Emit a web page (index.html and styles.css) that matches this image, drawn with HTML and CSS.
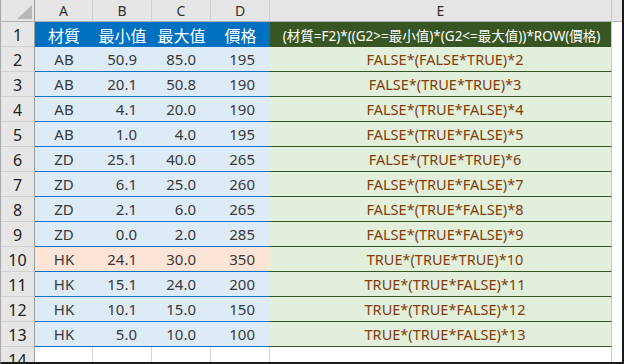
FILE: index.html
```html
<!DOCTYPE html>
<html lang="zh-Hant">
<head>
<meta charset="utf-8">
<link rel="stylesheet" href="styles.css">
</head>
<body>
<div class="sheet">
  <div class="grid">
    <div class="ch corner"><span class="tri"></span></div>
    <div class="ch">A</div><div class="ch">B</div><div class="ch">C</div><div class="ch">D</div><div class="ch ce">E</div><div class="ch cx"></div>

    <div class="rh">1</div>
    <div class="h1 b c">材質</div><div class="h1 b c">最小值</div><div class="h1 b c">最大值</div><div class="h1 b c">價格</div>
    <div class="h1 g c formula">(材質=F2)*((G2&gt;=最小值)*(G2&lt;=最大值))*ROW(價格)</div><div class="x"></div>

    <div class="rh">2</div><div class="d c">AB</div><div class="d r">50.9</div><div class="d r">85.0</div><div class="d r">195</div><div class="e">FALSE*(FALSE*TRUE)*2</div><div class="x"></div>
    <div class="rh">3</div><div class="d c">AB</div><div class="d r">20.1</div><div class="d r">50.8</div><div class="d r">190</div><div class="e">FALSE*(TRUE*TRUE)*3</div><div class="x"></div>
    <div class="rh">4</div><div class="d c">AB</div><div class="d r">4.1</div><div class="d r">20.0</div><div class="d r">190</div><div class="e">FALSE*(TRUE*FALSE)*4</div><div class="x"></div>
    <div class="rh">5</div><div class="d c">AB</div><div class="d r">1.0</div><div class="d r">4.0</div><div class="d r">195</div><div class="e">FALSE*(TRUE*FALSE)*5</div><div class="x"></div>
    <div class="rh">6</div><div class="d c">ZD</div><div class="d r">25.1</div><div class="d r">40.0</div><div class="d r">265</div><div class="e">FALSE*(TRUE*TRUE)*6</div><div class="x"></div>
    <div class="rh">7</div><div class="d c">ZD</div><div class="d r">6.1</div><div class="d r">25.0</div><div class="d r">260</div><div class="e">FALSE*(TRUE*FALSE)*7</div><div class="x"></div>
    <div class="rh">8</div><div class="d c">ZD</div><div class="d r">2.1</div><div class="d r">6.0</div><div class="d r">265</div><div class="e">FALSE*(TRUE*FALSE)*8</div><div class="x"></div>
    <div class="rh">9</div><div class="d c">ZD</div><div class="d r">0.0</div><div class="d r">2.0</div><div class="d r">285</div><div class="e">FALSE*(TRUE*FALSE)*9</div><div class="x"></div>
    <div class="rh">10</div><div class="d p c">HK</div><div class="d p r">24.1</div><div class="d p r">30.0</div><div class="d p r">350</div><div class="e">TRUE*(TRUE*TRUE)*10</div><div class="x"></div>
    <div class="rh">11</div><div class="d c">HK</div><div class="d r">15.1</div><div class="d r">24.0</div><div class="d r">200</div><div class="e">TRUE*(TRUE*FALSE)*11</div><div class="x"></div>
    <div class="rh">12</div><div class="d c">HK</div><div class="d r">10.1</div><div class="d r">15.0</div><div class="d r">150</div><div class="e">TRUE*(TRUE*FALSE)*12</div><div class="x"></div>
    <div class="rh">13</div><div class="d c">HK</div><div class="d r">5.0</div><div class="d r">10.0</div><div class="d r">100</div><div class="e">TRUE*(TRUE*FALSE)*13</div><div class="x"></div>

    <div class="rh">14</div><div class="w"></div><div class="w"></div><div class="w"></div><div class="w"></div><div class="w we"></div><div class="x"></div>
  </div>
</div>
</body>
</html>
```
FILE: styles.css
```css
* { box-sizing: border-box; }
html, body { margin: 0; padding: 0; background: #fff; }
.sheet {
  width: 624px;
  height: 364px;
  border-right: 2px solid #1a1a1a;
  border-bottom: 2px solid #1a1a1a;
  border-left: 1px solid #a8a8a8;
  overflow: hidden;
  font-family: "Noto Sans", "Noto Sans CJK TC", sans-serif;
  font-size: 15px;
}
.grid {
  display: grid;
  grid-template-columns: 34px 58px 59px 59px 59px 342px 10px;
  grid-template-rows: 22px repeat(14, 25px);
}
.ch {
  background: #e6e6e6;
  border-right: 1px solid #d0d0d0;
  border-bottom: 1px solid #b0b0b0;
  color: #333;
  font-size: 14px;
  display: flex;
  align-items: center;
  justify-content: center;
}
.corner { border-right: 1px solid #9e9e9e; position: relative; }
.tri {
  position: absolute;
  right: 2px;
  bottom: 2px;
  width: 15px;
  height: 14px;
  background: #b8b8b8;
  clip-path: polygon(100% 0, 100% 100%, 0 100%);
}
.ce { border-right: 1px solid #c8c8c8; }
.cx { border-right: none; }
.rh {
  background: #e6e6e6;
  border-right: 1px solid #9e9e9e;
  border-bottom: 1px solid #d0d0d0;
  color: #222;
  font-size: 16px;
  display: flex;
  align-items: center;
  justify-content: center;
  padding-top: 2px;
}
.h1 { color: #fff; display: flex; align-items: center; font-size: 16px; }
.h1.b { background: #0070c0; }
.h1.g { background: #375623; border-right: 1px solid #c8c8c8; }
.formula { font-size: 13.5px; white-space: nowrap; padding-left: 2px; }
.c { justify-content: center; }
.d {
  background: #ddebf7;
  border-bottom: 1px solid #0070c0;
  color: #3a3a3a;
  display: flex;
  align-items: center;
}
.d.r { justify-content: flex-end; padding-right: 15px; }
.d.p { background: #fce4d6; }
.e {
  background: #e2efda;
  border-bottom: 1px solid #375623;
  border-right: 1px solid #c8c8c8;
  color: #833c0c;
  font-size: 14.5px;
  display: flex;
  align-items: center;
  justify-content: center;
  padding-left: 9px;
}
.x { background: #fff; }
.w { border-right: 1px solid #d4d4d4; }
.we { border-right: 1px solid #c8c8c8; }
```
